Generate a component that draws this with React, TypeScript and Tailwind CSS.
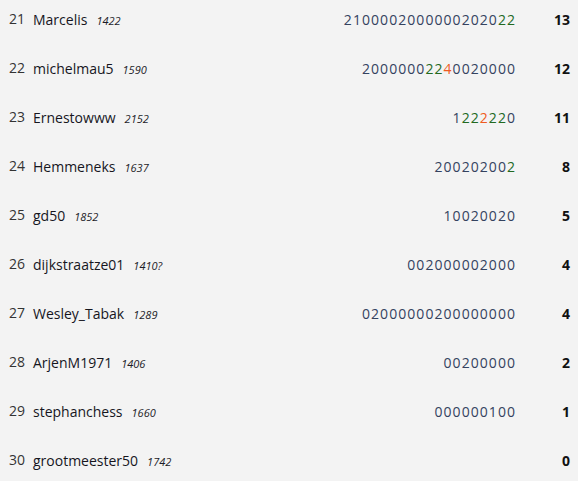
import * as React from 'react';

type Row = {
  rank: number;
  name: string;
  rating: string;
  results: string;
  green?: number[];
  orange?: number[];
  score: number;
};

const rows: Row[] = [
  { rank: 21, name: 'Marcelis', rating: '1422', results: '2100002000000202022', green: [17, 18], score: 13 },
  { rank: 22, name: 'michelmau5', rating: '1590', results: '20000002240020000', green: [7, 8], orange: [9], score: 12 },
  { rank: 23, name: 'Ernestowww', rating: '2152', results: '1222220', green: [1, 2, 4, 5], orange: [3], score: 11 },
  { rank: 24, name: 'Hemmeneks', rating: '1637', results: '200202002', green: [8], score: 8 },
  { rank: 25, name: 'gd50', rating: '1852', results: '10020020', score: 5 },
  { rank: 26, name: 'dijkstraatze01', rating: '1410?', results: '002000002000', score: 4 },
  { rank: 27, name: 'Wesley_Tabak', rating: '1289', results: '02000000200000000', score: 4 },
  { rank: 28, name: 'ArjenM1971', rating: '1406', results: '00200000', score: 2 },
  { rank: 29, name: 'stephanchess', rating: '1660', results: '000000100', score: 1 },
  { rank: 30, name: 'grootmeester50', rating: '1742', results: '', score: 0 },
];

function Results({ row }: { row: Row }) {
  return (
    <span className="ml-auto text-[14px] leading-[19px] tracking-[1.05px] text-[#34425f]">
      {row.results.split('').map((d, i) => {
        const cls = row.green?.includes(i)
          ? 'text-[#22691f]'
          : row.orange?.includes(i)
            ? 'text-[#ef5b22]'
            : '';
        return (
          <span key={i} className={cls}>
            {d}
          </span>
        );
      })}
    </span>
  );
}

export default function App() {
  return (
    <div className="min-h-screen overflow-hidden bg-[#f3f3f3] font-['Open_Sans',sans-serif]">
      <div className="-mt-[5px]">
        {rows.map((row) => (
          <div key={row.rank} className="flex h-[49px] items-center pl-[9px] pr-[8px]">
            <span className="w-[16px] -translate-y-px text-[14px] leading-[19px] text-[#333]">{row.rank}</span>
            <div className="ml-[8px] flex items-baseline">
              <span className="text-[14px] leading-[19px] text-[#16161e]">{row.name}</span>
              <span className="ml-[9px] text-[11px] italic text-[#1c1c28]">{row.rating}</span>
            </div>
            <Results row={row} />
            <span className="w-[54px] text-right text-[14px] font-bold leading-[19px] text-[#111]">
              {row.score}
            </span>
          </div>
        ))}
      </div>
    </div>
  );
}
